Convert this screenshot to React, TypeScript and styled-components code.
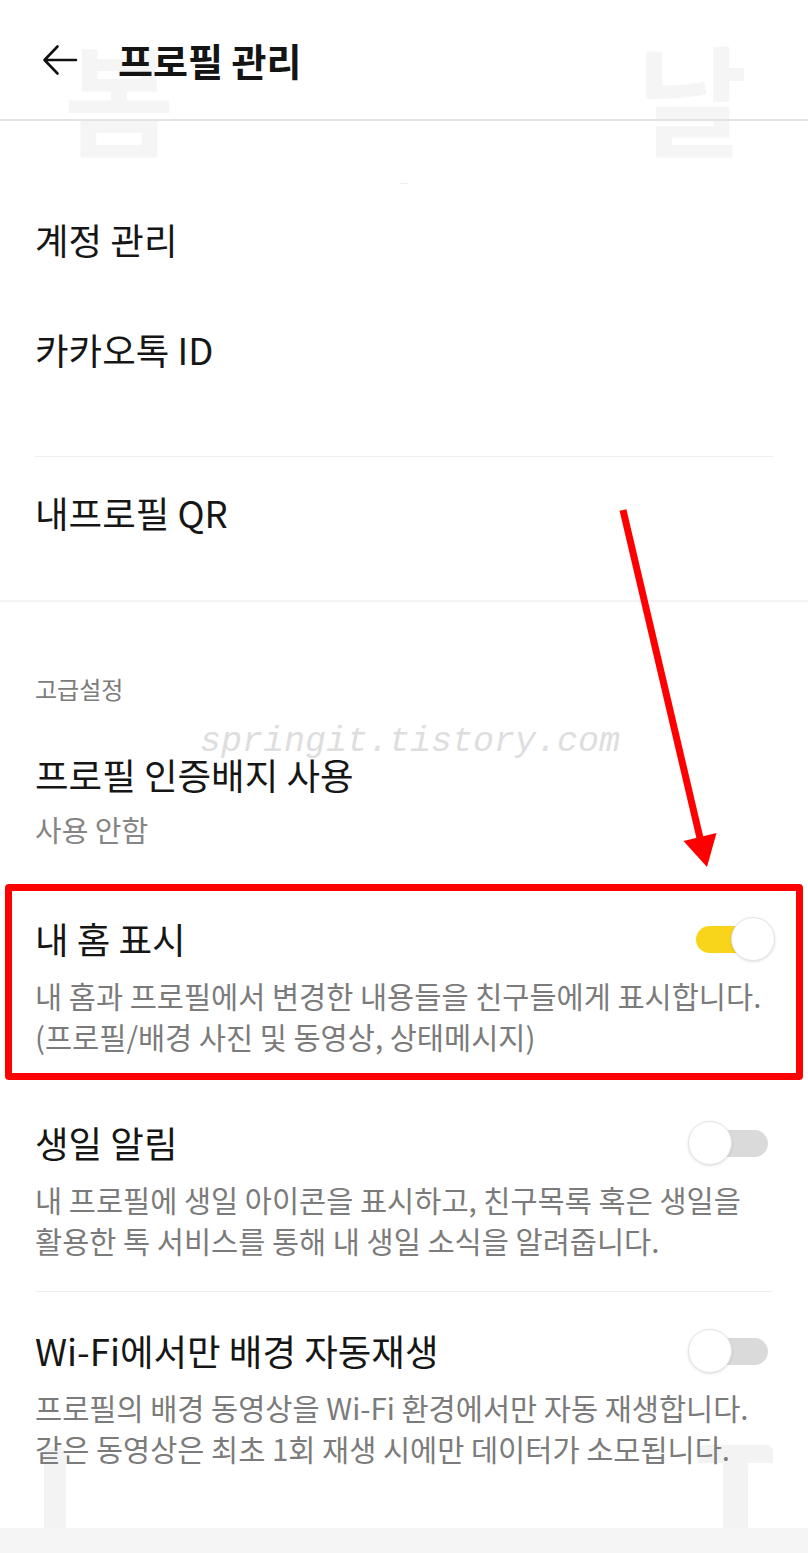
import React from "react";
import styled, { createGlobalStyle } from "styled-components";

const GlobalStyle = createGlobalStyle`
  html, body { margin: 0; padding: 0; background: #ffffff; }
  body {
    font-family: "Noto Sans CJK KR", "Noto Sans", sans-serif;
    -webkit-font-smoothing: antialiased;
  }
  * { box-sizing: border-box; }
`;

const Page = styled.div`
  position: relative;
  width: 808px;
  min-height: 1553px;
  display: flex;
  flex-direction: column;
  overflow: hidden;
  background: #ffffff;
`;

/* ---------- decorative watermark layer (lies under the content) ---------- */
const FaintGlyph = styled.span<{ $left: number; $top: number }>`
  position: absolute;
  left: ${(p) => p.$left}px;
  top: ${(p) => p.$top}px;
  font-size: 120px;
  line-height: 1;
  font-weight: 700;
  color: #f5f5f5;
  z-index: 0;
  pointer-events: none;
`;

const FaintBar = styled.div<{ $left: number; $top: number; $w: number; $h: number }>`
  position: absolute;
  left: ${(p) => p.$left}px;
  top: ${(p) => p.$top}px;
  width: ${(p) => p.$w}px;
  height: ${(p) => p.$h}px;
  border-radius: 6px 6px 0 0;
  background: #f3f3f3;
  z-index: 0;
  pointer-events: none;
`;

const UrlMark = styled.span`
  position: absolute;
  left: 200px;
  top: 725px;
  font-family: "Liberation Mono", "DejaVu Sans Mono", monospace;
  font-style: italic;
  font-size: 35px;
  line-height: 1;
  color: #dedede;
  z-index: 3;
  pointer-events: none;
  white-space: nowrap;
`;

const AnnotationArrow = styled.svg`
  position: absolute;
  left: 600px;
  top: 500px;
  z-index: 4;
  pointer-events: none;
`;

/* ---------- content ---------- */
const Content = styled.div`
  position: relative;
  z-index: 1;
  display: flex;
  flex-direction: column;
  flex: 1;
`;

const Header = styled.header`
  height: 121px;
  display: flex;
  align-items: center;
  gap: 40px;
  padding-left: 42px;
  border-bottom: 2px solid #e3e3e3;
`;

const BackButton = styled.button`
  display: flex;
  align-items: center;
  padding: 0;
  margin: 0;
  border: 0;
  background: transparent;
  cursor: pointer;
`;

const HeaderTitle = styled.h1`
  margin: 0;
  font-size: 38px;
  line-height: 1;
  font-weight: 700;
  color: #141414;
`;

const Divider = styled.div<{ $top: number; $inset: string; $color?: string; $h?: number }>`
  height: ${(p) => p.$h ?? 1}px;
  margin: ${(p) => p.$top}px ${(p) => p.$inset};
  margin-bottom: 0;
  background: ${(p) => p.$color ?? "#efefef"};
`;

const NavRow = styled.div`
  height: 110px;
  display: flex;
  align-items: center;
  padding-left: 35px;
  font-size: 36.5px;
  color: #161616;
`;

const SectionLabel = styled.div`
  margin-top: 72px;
  padding-left: 35px;
  font-size: 24px;
  line-height: 30px;
  color: #7c7c7c;
`;

const InfoItem = styled.div`
  padding: 49px 35px 31px;
`;

const ItemTitle = styled.div`
  font-size: 36.5px;
  line-height: 44px;
  color: #161616;
  white-space: nowrap;
`;

const ItemValue = styled.div`
  margin-top: 12px;
  font-size: 29px;
  line-height: 40px;
  color: #858585;
`;

const ToggleItem = styled.div`
  position: relative;
  padding: 37px 40px 27px 35px;
`;

const HighlightFrame = styled.div`
  position: absolute;
  left: 5px;
  right: 5px;
  top: 4px;
  bottom: 4px;
  border: 7px solid #ff0000;
  border-radius: 4px;
  z-index: 2;
  pointer-events: none;
`;

const ItemHead = styled.div`
  display: flex;
  align-items: center;
  justify-content: space-between;
`;

const ItemDesc = styled.p`
  margin: 14px 0 0;
  font-size: 29.5px;
  line-height: 41px;
  color: #7b7b7b;
  white-space: nowrap;
`;

const Switch = styled.div<{ $on: boolean }>`
  position: relative;
  width: 72px;
  height: 44px;
  flex-shrink: 0;
  display: flex;
  align-items: center;
`;

const SwitchTrack = styled.div<{ $on: boolean }>`
  width: 100%;
  height: 27px;
  border-radius: 14px;
  background: ${(p) => (p.$on ? "#f8d41a" : "#dadada")};
`;

const SwitchThumb = styled.div<{ $on: boolean }>`
  position: absolute;
  top: 0;
  ${(p) => (p.$on ? "right: -7px;" : "left: -8px;")}
  width: 44px;
  height: 44px;
  border-radius: 50%;
  background: #ffffff;
  border: 1px solid #e4e4e4;
  box-shadow: 0 1px 3px rgba(0, 0, 0, 0.12);
`;

const FooterBand = styled.div`
  margin-top: auto;
  height: 25px;
  background: #f5f5f5;
`;

type ToggleProps = { on: boolean };
const Toggle = ({ on }: ToggleProps) => (
  <Switch $on={on} role="switch" aria-checked={on}>
    <SwitchTrack $on={on} />
    <SwitchThumb $on={on} />
  </Switch>
);

type SettingProps = {
  title: string;
  lines: string[];
  on: boolean;
  highlighted?: boolean;
};

const ToggleSetting = ({ title, lines, on, highlighted }: SettingProps) => (
  <ToggleItem>
    {highlighted && <HighlightFrame />}
    <ItemHead>
      <ItemTitle>{title}</ItemTitle>
      <Toggle on={on} />
    </ItemHead>
    <ItemDesc>
      {lines.map((l, i) => (
        <React.Fragment key={i}>
          {i > 0 && <br />}
          {l}
        </React.Fragment>
      ))}
    </ItemDesc>
  </ToggleItem>
);

export default function App() {
  return (
    <>
      <GlobalStyle />
      <Page>
        <FaintGlyph $left={64} $top={36}>봄</FaintGlyph>
        <FaintGlyph $left={637} $top={36}>날</FaintGlyph>
        <FaintBar $left={44} $top={1447} $w={22} $h={86} />
        <FaintBar $left={698} $top={1445} $w={75} $h={18} />
        <FaintBar $left={723} $top={1460} $w={25} $h={73} />

        <Content>
          <Header>
            <BackButton aria-label="뒤로">
              <svg width="36" height="32" viewBox="0 0 36 32" fill="none">
                <path
                  d="M34 16H2.8M15.5 2.5L2.5 16L15.5 29.5"
                  stroke="#111"
                  strokeWidth="2.6"
                  strokeLinecap="round"
                  strokeLinejoin="round"
                />
              </svg>
            </BackButton>
            <HeaderTitle>프로필 관리</HeaderTitle>
          </Header>

          <Divider $top={62} $inset="400px 35px" />
          <NavRow>계정 관리</NavRow>
          <NavRow>카카오톡 ID</NavRow>
          <Divider $top={52} $inset="35px" />
          <NavRow>내프로필 QR</NavRow>
          <Divider $top={33} $inset="0px" $h={2} $color="#f4f4f4" />

          <SectionLabel>고급설정</SectionLabel>
          <InfoItem>
            <ItemTitle>프로필 인증배지 사용</ItemTitle>
            <ItemValue>사용 안함</ItemValue>
          </InfoItem>

          <ToggleSetting
            highlighted
            on
            title="내 홈 표시"
            lines={[
              "내 홈과 프로필에서 변경한 내용들을 친구들에게 표시합니다.",
              "(프로필/배경 사진 및 동영상, 상태메시지)",
            ]}
          />
          <ToggleSetting
            on={false}
            title="생일 알림"
            lines={[
              "내 프로필에 생일 아이콘을 표시하고, 친구목록 혹은 생일을",
              "활용한 톡 서비스를 통해 내 생일 소식을 알려줍니다.",
            ]}
          />
          <Divider $top={3} $inset="35px" />
          <ToggleSetting
            on={false}
            title="Wi-Fi에서만 배경 자동재생"
            lines={[
              "프로필의 배경 동영상을 Wi-Fi 환경에서만 자동 재생합니다.",
              "같은 동영상은 최초 1회 재생 시에만 데이터가 소모됩니다.",
            ]}
          />
          <FooterBand />
        </Content>

        <UrlMark>springit.tistory.com</UrlMark>

        <AnnotationArrow width="130" height="380" viewBox="0 0 130 380">
          <line x1="23" y1="10" x2="100" y2="338" stroke="#ff0000" strokeWidth="7" />
          <polygon points="83.5,341 116.5,333 107,367" fill="#ff0000" />
        </AnnotationArrow>
      </Page>
    </>
  );
}
